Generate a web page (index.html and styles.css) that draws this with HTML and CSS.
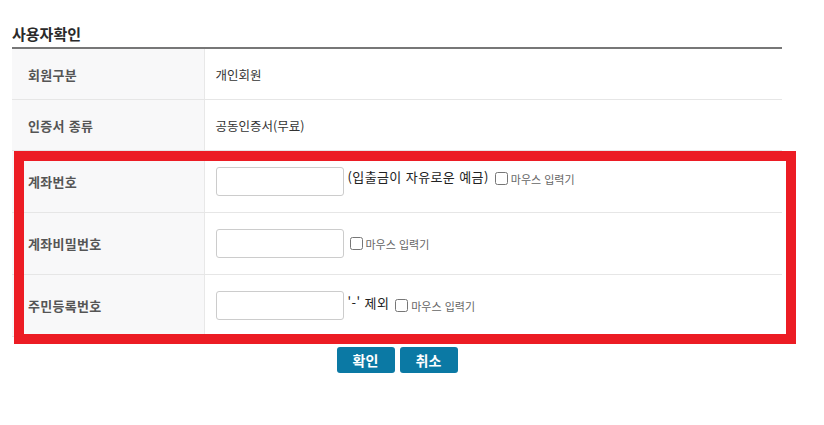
FILE: index.html
```html
<!DOCTYPE html>
<html lang="ko">
<head>
<meta charset="utf-8">
<link rel="stylesheet" href="styles.css">
</head>
<body>
<div class="wrap">
  <h2 class="title">사용자확인</h2>
  <table class="form">
    <colgroup><col class="c-label"><col></colgroup>
    <tr class="short">
      <th>회원구분</th>
      <td>개인회원</td>
    </tr>
    <tr class="short">
      <th>인증서 종류</th>
      <td>공동인증서(무료)</td>
    </tr>
    <tr class="tall">
      <th>계좌번호</th>
      <td><span class="field raised"><input type="text" class="inp"><span class="note">(입출금이 자유로운 예금)</span><label class="mouse"><input type="checkbox">마우스 입력기</label></span></td>
    </tr>
    <tr class="tall">
      <th>계좌비밀번호</th>
      <td><span class="field"><input type="password" class="inp"><label class="mouse"><input type="checkbox">마우스 입력기</label></span></td>
    </tr>
    <tr class="tall">
      <th>주민등록번호</th>
      <td><span class="field"><input type="text" class="inp"><span class="note">'-' 제외</span><label class="mouse"><input type="checkbox">마우스 입력기</label></span></td>
    </tr>
  </table>
  <div class="buttons">
    <button class="btn">확인</button>
    <button class="btn">취소</button>
  </div>
</div>
<div class="highlight"></div>
</body>
</html>
```
FILE: styles.css
```css
html, body {
  margin: 0;
  padding: 0;
  background: #fff;
}
body {
  font-family: "Noto Sans CJK KR", "Noto Sans", sans-serif;
  color: #333;
  position: relative;
  width: 824px;
  height: 425px;
  overflow: hidden;
}
.wrap {
  padding-left: 12px;
  width: 770px;
}
.title {
  margin: 0;
  padding: 24px 0 3px;
  font-size: 15px;
  line-height: 20px;
  font-weight: bold;
  color: #2a2a2a;
  border-bottom: 2px solid #777;
}
.form {
  width: 770px;
  border-collapse: collapse;
  table-layout: fixed;
}
.c-label {
  width: 192px;
}
.form th {
  background: #f8f8f9;
  border-right: 1px solid #e8e8e8;
  border-bottom: 1px solid #e6e6e6;
  text-align: left;
  padding: 0 0 0 16px;
  font-size: 13px;
  font-weight: bold;
  color: #555;
  letter-spacing: 0.3px;
}
.form td {
  border-bottom: 1px solid #e6e6e6;
  padding: 0 0 0 11px;
  font-size: 12.5px;
  color: #333;
}
.short th, .short td {
  height: 50px;
}
.tall th, .tall td {
  height: 61px;
}
.field {
  display: flex;
  align-items: center;
}
.inp {
  box-sizing: border-box;
  width: 128px;
  height: 29px;
  border: 1px solid #ccc;
  border-radius: 3px;
  margin: 0;
  padding: 0 4px;
  background: #fff;
}
.note {
  font-size: 13px;
  color: #222;
  margin-left: 4px;
  letter-spacing: 0.4px;
  position: relative;
  top: -3px;
}
.raised .note {
  top: -5px;
}
.raised .mouse {
  position: relative;
  top: -3px;
}
.mouse {
  display: inline-flex;
  align-items: center;
  font-size: 11px;
  color: #666;
  margin-left: 6px;
}
.mouse input {
  width: 13px;
  height: 13px;
  margin: 0 3px 0 0;
}
.buttons {
  display: flex;
  justify-content: center;
  gap: 5px;
  margin-top: 10px;
}
.btn {
  width: 58px;
  height: 26px;
  border: 0;
  border-radius: 3px;
  background: #0b79a4;
  color: #fff;
  font-family: "Noto Sans CJK KR", sans-serif;
  font-size: 14px;
  font-weight: bold;
  padding: 0;
}
.highlight {
  position: absolute;
  left: 14px;
  top: 151px;
  width: 782px;
  height: 193px;
  box-sizing: border-box;
  border: 10px solid #ec1c24;
}
```
